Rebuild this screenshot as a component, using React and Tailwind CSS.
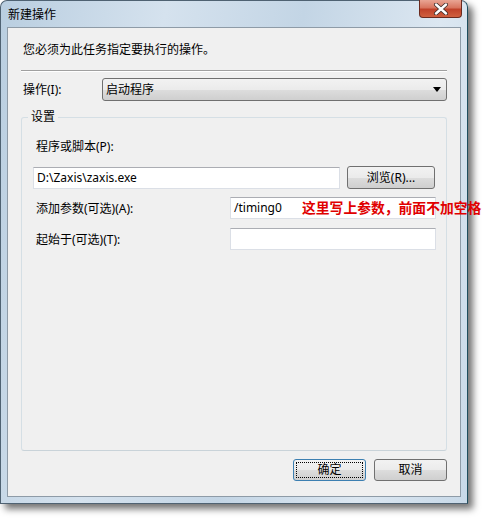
import React from "react";

const cjk = { fontFamily: '"Noto Sans", "Noto Sans CJK SC", sans-serif' };

function VistaButton({ children, focused, className = "w-[73px] h-[22px]" }) {
  return (
    <div
      className={
        "relative rounded-[3px] border flex items-center justify-center text-[12px] text-black bg-[linear-gradient(#f2f2f2_0%,#ebebeb_50%,#dddddd_51%,#cfcfcf_100%)] " +
        (focused ? "border-[#3c7fb1] " : "border-[#707070] ") +
        className
      }
    >
      {focused && (
        <div className="absolute inset-[2px] border border-dotted border-black"></div>
      )}
      <span className="relative">{children}</span>
    </div>
  );
}

function TextBox({ value, className }) {
  return (
    <div
      className={
        "h-[22px] bg-white border border-[#dbdfe6] border-t-[#abadb3] flex items-center px-[3px] text-[12px] text-black " +
        className
      }
    >
      {value}
    </div>
  );
}

export default function App() {
  return (
    <div className="w-[487px] h-[522px] bg-white relative" style={cjk}>
      {/* Window frame */}
      <div className="w-[468px] h-[504px] rounded-t-[7px] border border-[#4f6272] border-r-[#1f4e5e] bg-[linear-gradient(100deg,#b9cee0_0%,#d5e2ee_30%,#c3d5e5_55%,#dce7f1_80%,#c8d9e8_100%)] shadow-[5px_5px_7px_rgba(0,0,0,0.55)] flex flex-col">
        {/* Title bar */}
        <div className="relative h-[26px] flex items-center pl-[7px] text-[12px] text-black">
          <span className="mt-[2px]">新建操作</span>
          <div className="absolute right-[5px] -top-[1px] w-[43px] h-[18px] rounded-b-[4px] border border-[#6b2a1e] border-t-0 bg-[linear-gradient(#e9a594_0%,#d8755f_45%,#c0422a_55%,#d0603f_100%)] flex items-center justify-center">
            <svg width="16" height="12" viewBox="0 0 16 12">
              <path
                d="M3 1.5 L13 10.5 M13 1.5 L3 10.5"
                stroke="#3b2b28"
                strokeWidth="4"
                strokeLinecap="round"
              />
              <path
                d="M3 1.5 L13 10.5 M13 1.5 L3 10.5"
                stroke="#ffffff"
                strokeWidth="2.4"
                strokeLinecap="round"
              />
            </svg>
          </div>
        </div>

        {/* Client area */}
        <div className="flex-1 mx-[6px] mb-[6px] border border-[#8e9ba7] bg-[#f0f0f0] flex flex-col px-[13px] text-[12px] text-black">
          <p className="pl-[2px] mt-[14px] leading-[16px]">您必须为此任务指定要执行的操作。</p>

          <div className="mt-[12px] border-t border-[#a0a0a0] border-b border-b-white"></div>

          <div className="mt-[6px] flex items-center">
            <span className="pl-[2px] w-[81px]">操作(I):</span>
            <div className="h-[23px] w-[345px] rounded-[3px] border border-[#707070] bg-[linear-gradient(#f2f2f2_0%,#ebebeb_50%,#dddddd_51%,#cfcfcf_100%)] flex items-center justify-between pl-[3px] pr-[5px]">
              <span>启动程序</span>
              <svg width="8" height="5" viewBox="0 0 8 5">
                <path d="M0 0 H8 L4 5 Z" fill="#000" />
              </svg>
            </div>
          </div>

          {/* Group box */}
          <div className="relative mt-[16px] h-[334px] w-[426px] rounded-[3px] border border-[#d5dfe5] border-b-[#c9d3d9]">
            <span className="absolute -top-[9px] left-[6px] px-[3px] bg-[#f0f0f0] leading-[16px]">设置</span>

            <div className="flex flex-col pl-[11px] pt-[21px]">
              <span className="pl-[3px] leading-[16px]">程序或脚本(P):</span>
              <div className="mt-[11px] flex items-center gap-[7px]">
                <TextBox value="D:\Zaxis\zaxis.exe" className="w-[307px]" />
                <VistaButton className="w-[88px] h-[23px]">浏览(R)...</VistaButton>
              </div>

              <div className="mt-[8px] flex items-center">
                <span className="pl-[3px] w-[197px] mt-[2px]">添加参数(可选)(A):</span>
                <div className="relative">
                  <TextBox value="/timing0" className="w-[206px]" />
                  <span className="absolute left-[72px] top-[2px] whitespace-nowrap text-[13.8px] font-bold text-[#e00000] leading-[18px]">
                    这里写上参数，前面不加空格
                  </span>
                </div>
              </div>

              <div className="mt-[9px] flex items-center">
                <span className="pl-[3px] w-[197px] mt-[2px]">起始于(可选)(T):</span>
                <TextBox value="" className="w-[206px]" />
              </div>
            </div>
          </div>

          <div className="mt-[8px] flex justify-end gap-[8px]">
            <VistaButton focused>确定</VistaButton>
            <VistaButton>取消</VistaButton>
          </div>
        </div>
      </div>
    </div>
  );
}
